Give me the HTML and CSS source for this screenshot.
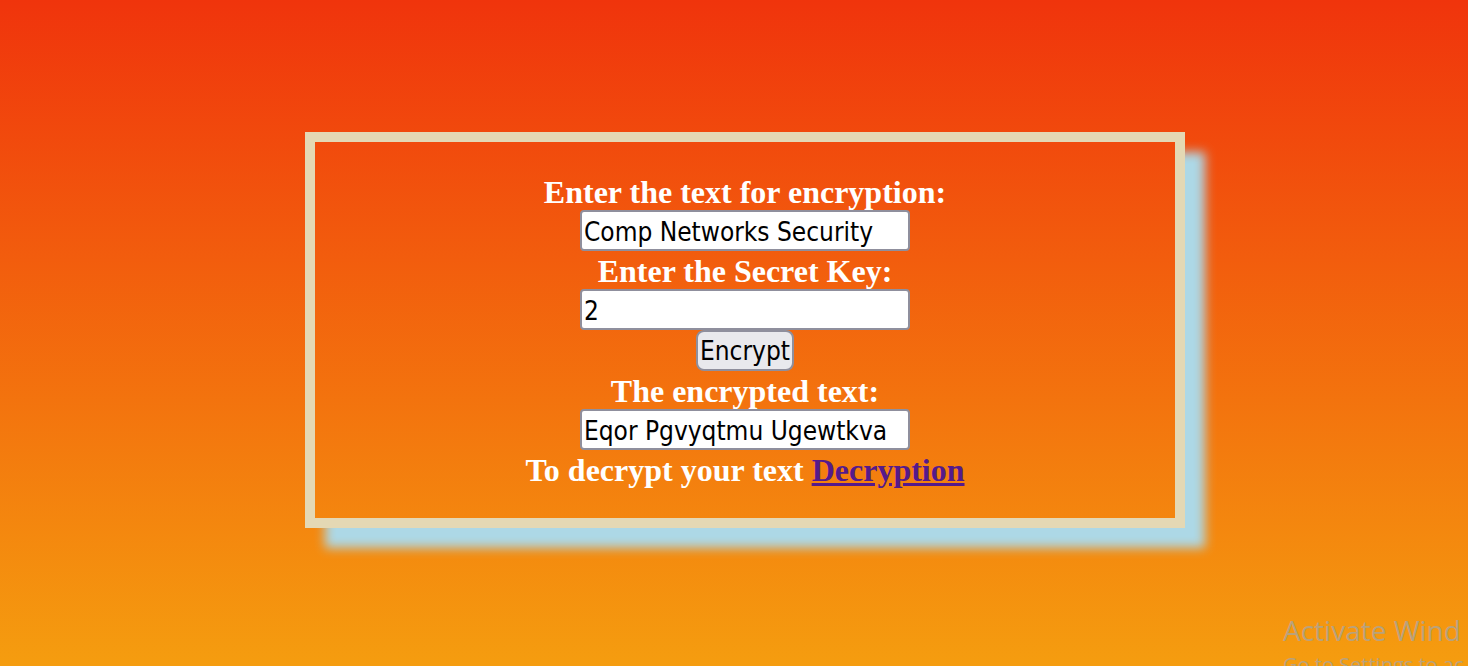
FILE: index.html
```html
<!DOCTYPE html>
<html lang="en">
<head>
<meta charset="utf-8">
<title>Encryption</title>
<link rel="stylesheet" href="styles.css">
</head>
<body>
<main class="card">
  <form class="form">
    <label class="line" for="plain">Enter the text for encryption:</label>
    <input class="field" id="plain" type="text" value="Comp Networks Security">
    <label class="line" for="key">Enter the Secret Key:</label>
    <input class="field" id="key" type="text" value="2">
    <button class="encrypt" type="button">Encrypt</button>
    <label class="line" for="result">The encrypted text:</label>
    <input class="field" id="result" type="text" value="Eqor Pgvyqtmu Ugewtkva">
    <p class="line">To decrypt your text <a class="link" href="#">Decryption</a></p>
  </form>
</main>
<aside class="watermark">
  <div class="watermark-title">Activate Wind</div>
  <div class="watermark-note">Go to Settings to ac</div>
</aside>
</body>
</html>
```
FILE: styles.css
```css
* { box-sizing: border-box; }

body {
  margin: 0;
  min-height: 100vh;
  padding-top: 132px;
  position: relative;
  overflow: hidden;
  background: linear-gradient(#f0340c, #f59d0f);
  font-family: "Liberation Serif", "Times New Roman", serif;
}

.card {
  width: 60%;
  margin-left: calc(20% + 11px);
  padding: 30px;
  border: 10px solid #e4d8b4;
  box-shadow: 20px 20px 10px lightblue;
}

.form {
  display: flex;
  flex-direction: column;
  align-items: center;
  color: #fff;
  font-size: 32px;
  font-weight: bold;
}

.line {
  margin: 0;
  padding-top: 2px;
  line-height: 36px;
}

.link { color: #551a8b; }

.field,
.encrypt {
  height: 41px;
  padding: 2px 2px 0;
  border: 2px solid #8f8f9d;
  border-radius: 4px;
  font-family: "DejaVu Sans Condensed", "Open Sans", sans-serif;
  font-size: 26px;
  color: #000;
}

.field {
  width: 330px;
  background: #fff;
}

.encrypt {
  border-radius: 8px;
  background: #e9e9ed;
  line-height: 35px;
}

.watermark {
  position: absolute;
  right: 0;
  bottom: -15px;
  width: 185px;
  color: #b9a27c;
  font-family: "Open Sans", sans-serif;
  white-space: nowrap;
}

.watermark-title { font-size: 28px; line-height: 38px; }
.watermark-note { font-size: 20px; line-height: 32px; }
```
